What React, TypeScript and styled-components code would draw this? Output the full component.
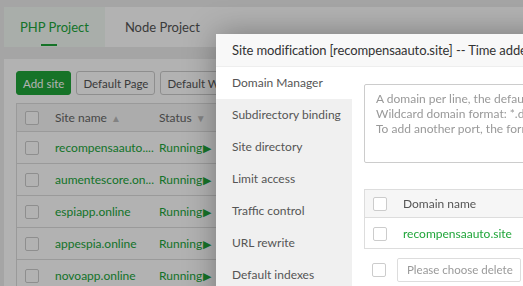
import { createGlobalStyle, styled } from "styled-components";

const GlobalStyle = createGlobalStyle`
  html, body {
    margin: 0;
    padding: 0;
    overflow: hidden;
    background: #ececec;
    font-family: Lato, "Liberation Sans", sans-serif;
    font-size: 12px;
    color: #333;
  }
`;

const sites = [
  "recompensaauto....",
  "aumentescore.on...",
  "espiapp.online",
  "appespia.online",
  "novoapp.online",
];

const navItems = [
  "Domain Manager",
  "Subdirectory binding",
  "Site directory",
  "Limit access",
  "Traffic control",
  "URL rewrite",
  "Default indexes",
];

const Page = styled.div`
  width: 900px;
  padding: 7px 0 0 4px;
  display: flex;
  flex-direction: column;
  gap: 12px;
`;

const TabBar = styled.div`
  display: flex;
  height: 40px;
  background: #fff;
  border-radius: 2px;
`;

const Tab = styled.div<{ $active?: boolean }>`
  position: relative;
  padding: 0 ${(p) => (p.$active ? "16px" : "20px")};
  line-height: 40px;
  font-size: 13px;
  white-space: nowrap;
  color: ${(p) => (p.$active ? "#20a53a" : "#555")};
  background: ${(p) => (p.$active ? "#f2faf4" : "transparent")};

  &::after {
    content: "";
    display: ${(p) => (p.$active ? "block" : "none")};
    position: absolute;
    left: 37px;
    bottom: 1px;
    width: 16px;
    height: 2px;
    background: #20a53a;
  }
`;

const Card = styled.div`
  background: #fff;
  padding: 12px;
  display: flex;
  flex-direction: column;
  gap: 8px;
  height: 400px;
`;

const Toolbar = styled.div`
  display: flex;
  gap: 5px;
  width: 200px;
  overflow: hidden;
`;

const Btn = styled.button<{ $primary?: boolean }>`
  flex-shrink: 0;
  height: 24px;
  padding: 0 6px;
  font-family: inherit;
  font-size: 11.5px;
  border-radius: 3px;
  border: 1px solid ${(p) => (p.$primary ? "#20a53a" : "#ccc")};
  background: ${(p) => (p.$primary ? "#20a53a" : "#fff")};
  color: ${(p) => (p.$primary ? "#fff" : "#555")};
`;

const Table = styled.table`
  border-collapse: collapse;
  width: 700px;
  border: 1px solid #ddd;
`;

const HeadRow = styled.tr`
  height: 28px;
  background: #f6f6f6;
  color: #666;
`;

const Row = styled.tr`
  height: 32px;
  border-top: 1px solid #ddd;
`;

const Cell = styled.td<{ $w?: number }>`
  padding: 0;
  width: ${(p) => (p.$w ? `${p.$w}px` : "auto")};
  text-align: left;
  white-space: nowrap;
`;

const Check = styled.span`
  display: inline-block;
  width: 12px;
  height: 12px;
  border: 1px solid #ccc;
  border-radius: 2px;
  background: #fff;
  vertical-align: middle;
  margin-left: 8px;
`;

const Sort = styled.span`
  color: #bbb;
  font-size: 10px;
  margin-left: 4px;
`;

const Link = styled.span`
  color: #20a53a;
`;

const Running = styled.span`
  color: #20a53a;
  &::after {
    content: "▶";
    font-size: 11px;
    margin-left: 1px;
  }
`;

const Overlay = styled.div`
  position: fixed;
  inset: 0;
  background: rgba(0, 0, 0, 0.3);
`;

const Modal = styled.div`
  position: fixed;
  left: 216px;
  top: 34px;
  width: 760px;
  height: 480px;
  background: #fff;
  box-shadow: 1px 1px 30px rgba(0, 0, 0, 0.35);
  display: flex;
  flex-direction: column;
`;

const ModalTitle = styled.div`
  height: 32px;
  line-height: 33px;
  padding-left: 16px;
  font-size: 13px;
  letter-spacing: -0.1px;
  color: #333;
  background: #f8f8f8;
  border-bottom: 1px solid #eee;
  white-space: nowrap;
`;

const ModalBody = styled.div`
  display: flex;
  flex: 1;
`;

const Nav = styled.div`
  width: 136px;
  background: #f0f0f0;
  display: flex;
  flex-direction: column;
`;

const NavItem = styled.div<{ $active?: boolean }>`
  height: 32px;
  line-height: 32px;
  padding-left: 16px;
  color: #555;
  background: ${(p) => (p.$active ? "#fff" : "transparent")};
  white-space: nowrap;
`;

const Content = styled.div`
  padding: 17px 12px;
  display: flex;
  flex-direction: column;
`;

const DomainInput = styled.textarea`
  width: 400px;
  height: 79px;
  box-sizing: border-box;
  border: 1px solid #ccc;
  border-radius: 2px;
  padding: 6px 11px;
  font-family: inherit;
  font-size: 12px;
  line-height: 15px;
  resize: none;
  white-space: pre;
  overflow: hidden;
  &::placeholder {
    color: #999;
  }
`;

const DomainTable = styled.table`
  margin-top: 26px;
  border-collapse: collapse;
  width: 500px;
  border: 1px solid #ddd;
`;

const DomainHead = styled.tr`
  height: 28px;
  background: #f6f6f6;
  color: #555;
`;

const DomainRow = styled.tr`
  height: 31px;
  border-top: 1px solid #ddd;
`;

const Footer = styled.div`
  margin-top: 9px;
  display: flex;
  align-items: center;
  gap: 11px;
`;

const SelectBox = styled.div`
  height: 22px;
  line-height: 22px;
  padding: 0 7px 0 9px;
  border: 1px solid #ddd;
  border-radius: 2px;
  color: #999;
  font-size: 11.5px;
  white-space: nowrap;
`;

export default function App() {
  return (
    <>
      <GlobalStyle />
      <Page>
        <TabBar>
          <Tab $active>PHP Project</Tab>
          <Tab>Node Project</Tab>
        </TabBar>
        <Card>
          <Toolbar>
            <Btn $primary>Add site</Btn>
            <Btn>Default Page</Btn>
            <Btn>Default Website</Btn>
          </Toolbar>
          <Table>
            <tbody>
              <HeadRow>
                <Cell $w={38}>
                  <Check />
                </Cell>
                <Cell $w={104}>
                  Site name<Sort>▲</Sort>
                </Cell>
                <Cell>
                  Status<Sort>▼</Sort>
                </Cell>
              </HeadRow>
              {sites.map((s) => (
                <Row key={s}>
                  <Cell>
                    <Check />
                  </Cell>
                  <Cell>
                    <Link>{s}</Link>
                  </Cell>
                  <Cell>
                    <Running>Running</Running>
                  </Cell>
                </Row>
              ))}
            </tbody>
          </Table>
        </Card>
      </Page>
      <Overlay />
      <Modal>
        <ModalTitle>
          Site modification [recompensaauto.site] -- Time added [2024-05-10]
        </ModalTitle>
        <ModalBody>
          <Nav>
            {navItems.map((n, i) => (
              <NavItem key={n} $active={i === 0}>
                {n}
              </NavItem>
            ))}
          </Nav>
          <Content>
            <DomainInput
              placeholder={
                "A domain per line, the default port is 80\nWildcard domain format: *.domain.com\nTo add another port, the format is www.domain.com:88"
              }
            />
            <DomainTable>
              <tbody>
                <DomainHead>
                  <Cell $w={38}>
                    <Check />
                  </Cell>
                  <Cell>Domain name</Cell>
                </DomainHead>
                <DomainRow>
                  <Cell>
                    <Check />
                  </Cell>
                  <Cell>
                    <Link>recompensaauto.site</Link>
                  </Cell>
                </DomainRow>
              </tbody>
            </DomainTable>
            <Footer>
              <Check />
              <SelectBox>Please choose delete</SelectBox>
            </Footer>
          </Content>
        </ModalBody>
      </Modal>
    </>
  );
}
